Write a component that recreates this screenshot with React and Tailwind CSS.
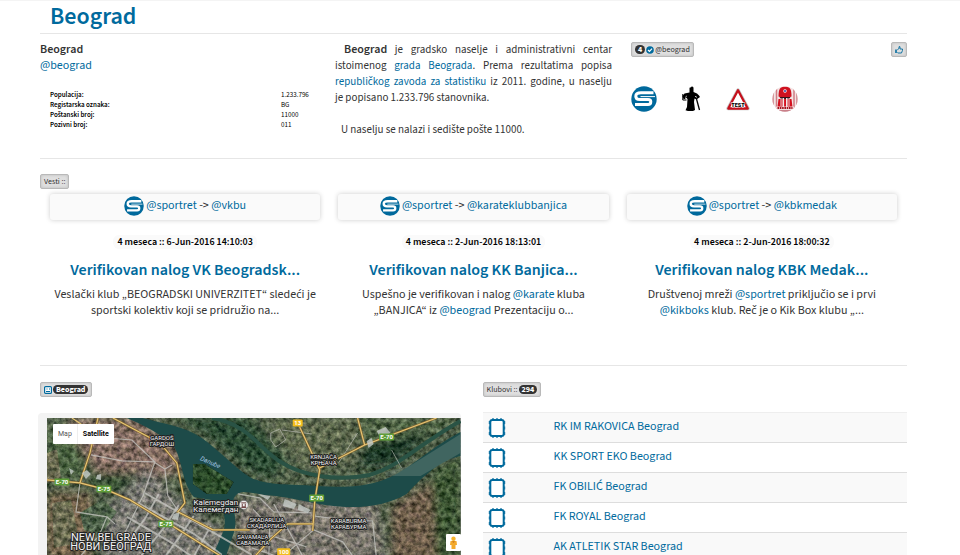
import React from "react";

const link = "text-[#006a9d]";
const badge =
  "inline-flex h-[15px] items-center gap-px rounded-[2px] border border-[#b9b9b9] bg-[#dfdfdf] px-[3px] text-[8px] leading-[13px] text-[#333] shadow-[inset_0_0_3px_#bbb]";
const pill = "rounded-full bg-[#333] px-[3px] text-[8px] font-bold leading-[9px] text-white";

const facts = [
  ["Populacija:", "1.233.796"],
  ["Registarska oznaka:", "BG"],
  ["Poštanski broj:", "11000"],
  ["Pozivni broj:", "011"],
];

const clubs = [
  "RK IM RAKOVICA Beograd",
  "KK SPORT EKO Beograd",
  "FK OBILIĆ Beograd",
  "FK ROYAL Beograd",
  "AK ATLETIK STAR Beograd",
];

function A({ children }) {
  return (
    <a href="#" className={link}>
      {children}
    </a>
  );
}

function SportLogo({ className }) {
  return (
    <svg viewBox="0 0 26 26" className={className} aria-hidden="true">
      <circle cx="13" cy="13" r="12.7" fill="#00699c" />
      <path
        d="M22.500 6.800H10C6.500 6.800 4.800 8 4.800 10.200S6.500 13.600 9 13.600H17C19 13.600 19.800 14.300 19.800 15.800S19 18.600 17 18.600H4"
        fill="none"
        stroke="#fff"
        strokeWidth="3"
      />
      <path d="M9.500 10.600H24" stroke="#fff" strokeWidth="1" />
    </svg>
  );
}

function Archer() {
  return (
    <svg viewBox="0 0 26 26" className="size-[26px]" aria-hidden="true">
      <path d="M11.500 1.800L13 1.300L14 .3L15.500 1.500V6L19 7.500L21 9.500L22 11L18.500 13.500L16.500 12.500L16 16L17 24L15 25H10L7.500 24.300L9 21L9.500 13L8 11.500L7 13H5.500L4.500 10L6.500 7.500L11.500 6.500Z" />
      <path d="M18.500 13L21.500 24" fill="none" stroke="#000" strokeWidth="1.300" />
      <path d="M4.800 8V14H8.500" fill="none" stroke="#000" strokeWidth="1" />
      <path d="M8.800 10L7.300 11.300M17 10.300L19 11.300" stroke="#fff" strokeWidth=".8" />
    </svg>
  );
}

function TestSign() {
  return (
    <svg viewBox="0 0 26 26" className="size-[26px]" aria-hidden="true">
      <path d="M13 4L23 22.500H3Z" fill="#fff" stroke="#c4c4c4" strokeWidth="3.500" strokeLinejoin="round" />
      <path d="M13 4.300L22.700 22.500H3.300Z" fill="#fff" stroke="#c5101c" strokeWidth="2.300" strokeLinejoin="round" />
      <text
        x="13"
        y="20.700"
        textAnchor="middle"
        fontSize="5.500"
        fontWeight="900"
        fontFamily="Roboto, sans-serif"
        stroke="#fff"
        strokeWidth=".8"
        paintOrder="stroke"
      >
        TEST
      </text>
    </svg>
  );
}

function FanCrest() {
  return (
    <svg viewBox="0 0 26 26" className="size-[26px]" aria-hidden="true">
      <defs>
        <clipPath id="crest">
          <circle cx="13" cy="13" r="12.700" />
        </clipPath>
      </defs>
      <g clipPath="url(#crest)">
        <path d="M0 0H26V26H0Z" fill="#f4e4e4" />
        <path d="M1 6V22M4.500 3V24M22 3V24M25 6V22" stroke="#cf7d84" strokeWidth="1.500" />
        <path d="M6.500 10.500C6.500 3 8 .8 13 .8S19.500 3 19.500 10.500L17 11.500H9Z" fill="#cf1220" />
        <path d="M7.500 11H18.500L17 13H9Z" fill="#38121a" />
        <path d="M6.500 13H19.500L20.500 21H5.500Z" fill="#d4101e" />
        <path d="M9 12V20M17 12V20" stroke="#e9cfcf" strokeWidth="1" />
        <path d="M11.300 12V21M14.800 12V21" stroke="#f2e9e9" strokeWidth="1.600" />
        <path d="M4 20.500H22V23.500H4Z" fill="#f1dada" />
        <path d="M5.500 22H20.500" stroke="#a3131f" strokeWidth="1.800" strokeDasharray="1.600 .7" />
        <path d="M7 24H19V26H7Z" fill="#c9808a" />
        <circle cx="13" cy="5" r="1.700" fill="#fff" />
        <circle cx="13" cy="5" r="1" fill="#2746a0" />
      </g>
    </svg>
  );
}

function ClubIcon() {
  return (
    <svg viewBox="0 0 18 20" className="h-5 w-[18px]" aria-hidden="true">
      <rect x="2.300" y="2" width="13.400" height="16" rx="2" fill="#fff" stroke="#006a9d" strokeWidth="2" />
      <path
        d="M1.300 3V6M1.300 8.500V11.500M1.300 14V17M16.700 3V6M16.700 8.500V11.500M16.700 14V17M4 .9H6M8 .9H10M12 .9H14M4 19.100H6M8 19.100H10M12 19.100H14"
        stroke="#006a9d"
        strokeWidth="1"
      />
    </svg>
  );
}

function Shield({ x, y, text, fill, color = "#fff", w = 15 }) {
  return (
    <g>
      <rect x={x - w / 2} y={y - 3.5} width={w} height="7" rx="1" fill={fill} />
      <text x={x} y={y + 2.3} textAnchor="middle" fontSize="6" fontWeight="700" fill={color}>
        {text}
      </text>
    </g>
  );
}

function Place({ x, y, lines, size = 6, gap = 6, weight = 400 }) {
  return (
    <g
      textAnchor="middle"
      fontSize={size}
      fontWeight={weight}
      fill="#f2f2f2"
      stroke="#222"
      strokeWidth="2"
      paintOrder="stroke"
      strokeLinejoin="round"
    >
      {lines.map((t, i) => (
        <text key={t} x={x} y={y + i * gap}>
          {t}
        </text>
      ))}
    </g>
  );
}

function CityMap() {
  return (
    <svg viewBox="0 0 414 142" className="block w-full" fontFamily="Roboto, sans-serif" role="img" aria-label="Beograd">
      <defs>
        <filter id="terrain" x="0" y="0" width="100%" height="100%" colorInterpolationFilters="sRGB">
          <feTurbulence type="fractalNoise" baseFrequency=".2" numOctaves="4" seed="7" result="n" />
          <feColorMatrix in="n" values="1 0 0 0 0  .92 .08 0 0 0  .9 0 .1 0 0  0 0 0 0 1" result="g" />
          <feComposite in="SourceGraphic" in2="g" operator="arithmetic" k1=".9" k2=".55" k3=".35" k4="-.17" result="c" />
          <feComposite in="c" in2="SourceGraphic" operator="in" />
        </filter>
        <filter id="soft">
          <feGaussianBlur stdDeviation="4" />
        </filter>
      </defs>
      <g filter="url(#terrain)">
        <rect width="414" height="142" fill="#4f5e47" />
        <g filter="url(#soft)">
          <path d="M20 0H90L130 25L134 55L110 60L50 55L25 20Z" fill="#806a5e" />
          <path d="M0 10L25 15L45 55L20 60L0 55Z" fill="#48603f" />
          <path d="M0 75H45V142H0Z" fill="#71604a" />
          <path d="M50 55H100L90 80L40 65Z" fill="#344d30" />
          <path d="M60 90L100 50L135 85L180 115V142H55Z" fill="#74756e" />
          <path d="M130 0H200L240 40L225 60L200 50L160 15Z" fill="#2a4a33" />
          <path d="M220 0H310V45L260 50L225 20Z" fill="#5d674d" />
          <path d="M310 0H414L380 20L320 45Z" fill="#4f6344" />
          <path d="M320 27L385 12L350 45L310 50Z" fill="#1a3828" />
          <path d="M190 80H330L340 142H190Z" fill="#77736a" />
          <path d="M345 88L375 70L414 45V142H345Z" fill="#6c5c4a" />
          <path d="M385 55L414 40V142H390Z" fill="#3a5233" />
        </g>
        <path d="M0 35L10 31L14 60L0 65ZM5 85L24 82L33 125L7 130Z" fill="#68694f" />
        <path d="M33 95L55 82L70 94L53 118L37 112Z" fill="#4c6048" />
      </g>
      <path
        d="M80 0H96C116 6 138 8 155 20S188 50 203 59S240 66 270 68S325 69 348 57S382 31 414 14V38C394 42 378 57 360 76C343 86 321 90 300 89C269 88 249 79 218 77C203 75 193 70 187 80C186 94 191 103 187 115L178 142H164L176 115C181 102 176 91 171 83L147 79C135 65 136 43 127 28C113 15 94 6 80 0Z"
        fill="#1d4b49"
      />
      <path d="M146 46L158 46L187 64L180 76L160 76L146 66Z" fill="#2b4a29" filter="url(#terrain)" />
      <path
        d="M165 0C202 6 212 31 234 44C253 57 289 64 323 57C354 48 371 27 414 3"
        fill="none"
        stroke="#2a5345"
        strokeWidth="4"
      />
      <path d="M339 54L363 48L414 16V35L374 58H339Z" fill="#7a9085" opacity=".38" />
      <g fill="none" stroke="#c8c8c3" strokeWidth="1.200" opacity=".75">
        <path d="M44 37L75 43L107 44M60 20L85 22L108 44L96 78L78 115M107 44L118 51L125 47M118 51L121 78L132 94" />
        <path d="M98 75L150 105L205 137M91 85L147 116L175 137M80 99L125 125L150 142M112 76L98 101L73 134M132 87L117 110L91 142M147 98L132 120L116 142M164 108L145 142" strokeWidth="1.800" />
        <path d="M33 65L29 94L60 99L68 106M60 99L52 118L30 142" />
        <path d="M191 76L213 80L227 94L265 95M206 91L223 109L222 142M266 98L306 103H326L330 142M267 112L296 124L309 142M267 112L232 142M227 86L241 111L258 142M196 120L225 118L260 129M205 130L241 142" />
        <path d="M224 15L233 11L239 22L229 29L224 22ZM235 12L265 16M311 15L292 45M345 32L355 50" strokeWidth=".8" />
      </g>
      <g fill="none" stroke="#80622f" strokeWidth="2.400">
        <path d="M0 62L33 65L60 72L83 82L116 102L180 142M33 65L43 35L51 0M66 0L113 25L130 45L138 85L131 94L166 112H203M253 9L273 52L268 84L266 113M273 50L318 27L390 0M311 0L318 27M266 106H241L223 122L205 142" />
      </g>
      <g fill="none" stroke="#e4c675" strokeWidth="1.200">
        <path d="M0 62L33 65L60 72L83 82L116 102L180 142M33 65L43 35L51 0M66 0L113 25L130 45L138 85L131 94L166 112H203M253 9L273 52L268 84L266 113M273 50L318 27L390 0M311 0L318 27M266 106H241L223 122L205 142M25 0L40 10" />
      </g>
      <g fill="#c6ccc8" opacity=".8">
        <path d="M35 55L40 52L44 56L39 61ZM50 57L54 56V62L49 61ZM22 50L27 53L24 57ZM127 96L133 94L131 102L125 101ZM238 81L250 86L247 91L236 88ZM252 86L264 92L261 95L251 92ZM330 13L339 9L344 15L334 20ZM320 23L325 20L327 26L322 30ZM211 76L224 78L221 82Z" />
      </g>
      <Shield x={15} y={64} text="E-70" fill="#5f9d38" />
      <Shield x={57} y={71} text="E-75" fill="#5f9d38" />
      <Shield x={119} y={106} text="E-75" fill="#5f9d38" />
      <Shield x={340} y={19} text="E-70" fill="#5f9d38" />
      <Shield x={270} y={80} text="E-70" fill="#5f9d38" />
      <Shield x={251} y={5} text="13" fill="#f2bd1d" w={10} />
      <Shield x={237} y={134} text="100" fill="#f2bd1d" w={13} />
      <Place x={115} y={22} lines={["GARDOŠ", "ГАРДОШ"]} />
      <Place x={277} y={41} lines={["KRNJAČA", "КРЊАЧА"]} />
      <Place x={220} y={104} lines={["SKADARLIJA", "СКАДАРЛИЈА"]} />
      <Place x={302} y={105} lines={["KARABURMA", "КАРАБУРМА"]} />
      <Place x={206} y={121} lines={["SAVAMALA", "САВАМАЛА"]} />
      <Place x={169} y={87} lines={["Kalemegdan", "Калемегдан"]} size={8} gap={7} />
      <Place x={64} y={123} lines={["NEW BELGRADE", "НОВИ БЕОГРАД"]} size={11} gap={9} />
      <text x="153" y="42" fontSize="6.500" fontStyle="italic" fill="#a5c8e4" transform="rotate(24 153 42)">
        Danube
      </text>
      <circle cx="197" cy="87" r="4.500" fill="#eee" stroke="#666" strokeWidth=".5" />
      <path d="M194.500 85H199.500M195.500 86V89H198.500V86M194.500 89.500H199.500" fill="none" stroke="#693b3b" strokeWidth="1" />
    </svg>
  );
}

function NewsCard({ target, date, title, children }) {
  return (
    <article className="text-center">
      <div className="flex h-[26px] items-center justify-center gap-0.5 rounded-[3px] bg-[#fafafa] pb-0.5 shadow-[0_0_5px_#ccc]">
        <SportLogo className="size-5" />
        <span>
          <A>@sportret</A> -&gt; <A>{target}</A>
        </span>
      </div>
      <p className="mt-3.5 h-4">
        <time className="inline-block rounded-md bg-[#fafafa] px-1 text-[10px] font-semibold leading-[14px] text-black">
          {date}
        </time>
      </p>
      <h2 className={"mt-[9px] text-base font-semibold leading-[22px] " + link}>{title}</h2>
      <p className="mt-1.5">{children}</p>
    </article>
  );
}

export default function App() {
  return (
    <main className="h-screen overflow-hidden border-t border-[#f4f4f4] bg-white pl-10 pr-[53px] font-['Source_Sans_Pro','Source_Sans_3','Noto_Sans_CJK_TC','Noto_Sans',sans-serif] text-xs leading-4 text-[#333]">
      <header className="border-b border-[#e6e6e6] px-2.5">
        <h1 className={"h-8 text-2xl font-semibold leading-[31px] " + link}>Beograd</h1>
      </header>

      <section className="grid h-[125px] grid-cols-3 gap-[18px] border-b border-[#e6e6e6] pt-2">
        <div>
          <p className="font-semibold">Beograd</p>
          <p>
            <A>@beograd</A>
          </p>
          <table className="ml-2.5 mt-4 w-[calc(100%-10px)] text-[7px] leading-[10px] text-black">
            <tbody>
              {facts.map(([k, v]) => (
                <tr key={k}>
                  <th scope="row" className="p-0 text-left font-semibold">
                    {k}
                  </th>
                  <td className="w-9 p-0">{v}</td>
                </tr>
              ))}
            </tbody>
          </table>
        </div>
        <div>
          <p className="text-justify text-[11px] leading-4">
            <span className="pl-[9px] text-xs font-semibold">Beograd</span> je gradsko naselje i administrativni centar
            istoimenog <A>grada Beograda</A>. Prema rezultatima popisa <A>republičkog zavoda za statistiku</A> iz 2011.
            godine, u naselju je&nbsp;popisano 1.233.796 stanovnika.
          </p>
          <p className="mt-4 pl-1.5 text-[11px] leading-4">U naselju se nalazi i sedište pošte 11000.</p>
        </div>
        <div className="pl-px">
          <div className="flex items-start justify-between">
            <button className={badge}>
              <span className={pill}>4</span>
              <svg viewBox="0 0 8 8" className="size-2" aria-hidden="true">
                <circle cx="4" cy="4" r="3.800" fill="#006a9d" />
                <path d="M2 4L3.500 5.500L6 2.700" fill="none" stroke="#fff" strokeWidth="1.200" />
              </svg>
              @beograd
            </button>
            <button className={badge} aria-label="Sviđa mi se">
              <svg viewBox="0 0 8 8" className="size-2" fill="none" stroke="#006a9d" aria-hidden="true">
                <path d="M.2 3.500H1.800V7H.2Z" fill="#006a9d" stroke="none" />
                <path d="M2.300 3.800L4 2.500V.7H5V3H7.500V4.300L6.500 7H3L2.300 6.500" strokeWidth=".9" />
              </svg>
            </button>
          </div>
          <div className="mt-[29px] flex gap-[21px]">
            <SportLogo className="size-[26px]" />
            <Archer />
            <TestSign />
            <FanCrest />
          </div>
        </div>
      </section>

      <section className="h-[207px] border-b border-[#e6e6e6] pt-[15px]">
        <div className="flex">
          <button className={badge}>Vesti ::</button>
        </div>
        <div className="mt-[5px] grid grid-cols-3 gap-[18px] px-2.5">
          <NewsCard target="@vkbu" date="4 meseca :: 6-Jun-2016 14:10:03" title="Verifikovan nalog VK Beogradsk...">
            Veslački klub „BEOGRADSKI UNIVERZITET“ sledeći je sportski kolektiv koji se pridružio na...
          </NewsCard>
          <NewsCard target="@karateklubbanjica" date="4 meseca :: 2-Jun-2016 18:13:01" title="Verifikovan nalog KK Banjica...">
            Uspešno je verifikovan i nalog <A>@karate</A> kluba „BANJICA“ iz <A>@beograd</A> Prezentaciju o...
          </NewsCard>
          <NewsCard target="@kbkmedak" date="4 meseca :: 2-Jun-2016 18:00:32" title="Verifikovan nalog KBK Medak...">
            Društvenoj mreži <A>@sportret</A> priključio se i prvi <A>@kikboks</A> klub. Reč je o Kik Box klubu „...
          </NewsCard>
        </div>
      </section>

      <section className="grid grid-cols-2 gap-[18px] pt-4">
        <div className="pr-1">
          <div className="flex">
            <button className={badge}>
              <svg viewBox="0 0 8 8" className="size-2" aria-hidden="true">
                <rect x=".6" y=".6" width="6.800" height="6.800" rx="1" fill="#fff" stroke="#006a9d" strokeWidth="1.200" />
                <path d="M2 5.500H6M2.500 3H3.500M5 3H6" stroke="#006a9d" />
              </svg>
              <span className={pill}>Beograd</span>
            </button>
          </div>
          <div className="relative -ml-0.5 mt-4 rounded-t bg-[#f3f3f3] pl-[9px] pt-[5px]">
            <CityMap />
            <div className="absolute left-[15px] top-[11px] flex h-5 rounded-[1px] bg-white font-[Roboto,sans-serif] text-[7px]">
              <button className="border-r border-[#eee] px-[5px] text-[#555]">Map</button>
              <button className="px-[5px] font-bold text-black">Satellite</button>
            </div>
            <button
              aria-label="Street View"
              className="absolute right-0 top-[121px] flex h-[17px] w-[15px] items-center justify-center rounded-[1px] bg-white"
            >
              <svg viewBox="0 0 9 14" className="h-3.5 w-[9px]" aria-hidden="true">
                <circle cx="4.500" cy="2.700" r="2.200" fill="#f5b32c" />
                <path d="M1.500 5H7.500L8 9H6.500V13H2.500V9H1Z" fill="#f3a92b" />
                <path d="M3 5.200H6L4.500 7Z" fill="#c9771c" />
              </svg>
            </button>
          </div>
        </div>
        <div>
          <div className="flex">
            <button className={badge}>
              Klubovi :: <span className={pill}>294</span>
            </button>
          </div>
          <table className="mt-[15px] w-full border-collapse">
            <tbody>
              {clubs.map((c) => (
                <tr key={c} className="h-[30px] border-t border-[#ddd] odd:bg-[#f9f9f9] first:border-[#eee]">
                  <td className="w-[71px] p-0 pl-[5px]">
                    <ClubIcon />
                  </td>
                  <td className="p-0 pb-0.5">
                    <A>{c}</A>
                  </td>
                </tr>
              ))}
            </tbody>
          </table>
        </div>
      </section>
    </main>
  );
}
